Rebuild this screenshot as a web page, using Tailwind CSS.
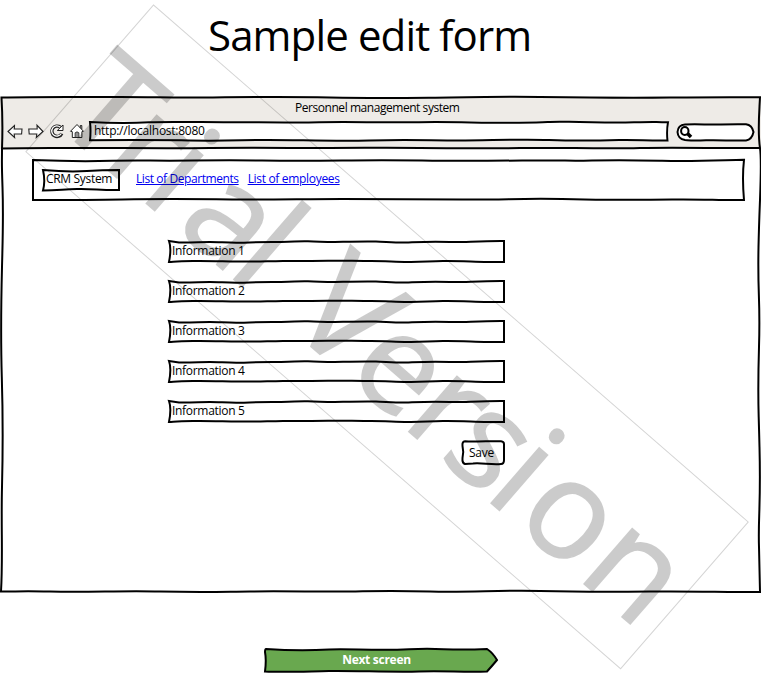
<!DOCTYPE html>
<html lang="en">
<head>
<meta charset="utf-8">
<title>Sample edit form</title>
<script src="https://cdn.jsdelivr.net/npm/@tailwindcss/browser@4"></script>
</head>
<body class="bg-white">
<svg class="hidden">
  <symbol id="field" viewBox="0 0 337 23" overflow="visible">
    <path d="M1 1 L11 2.600 C25 2.800 32 2 42 2 S60 3 72 2.700 S92 1.800 110 2 S125 1 140 1.300 S160 2.200 175 1.800 S198 1.300 208 1.500 S230 3 244 2.300 S270 1.400 282 2 S310 .8 336 1 V22 H320 C300 21.500 290 20.800 275 21 S255 22.200 240 22 S215 20.800 200 21 S180 20.400 160 20.800 S135 20.700 115 21 S90 21.800 70 21.500 S40 20.800 25 21 S10 21.400 1 22 C2 17 3.500 8 1 1 Z" fill="none" stroke="#000" stroke-width="2"/>
  </symbol>
</svg>
<main class="relative flex h-[673px] w-[761px] flex-col overflow-hidden font-['Open_Sans','Noto_Sans',sans-serif] text-[12px] leading-4 text-black">
  <h1 class="h-[97px] pt-[5px] pl-[208px] text-[42px] leading-[59px] tracking-[-0.88px] whitespace-nowrap">Sample edit form</h1>

  <section class="relative h-[496px] w-full">
    <header class="h-[52px] bg-[#eeebe7]">
      <div class="flex h-[24px] pt-[3px] pl-[295px]"><span class="tracking-[-0.45px] whitespace-nowrap">Personnel management system</span></div>
      <div class="flex h-[20px] items-center pl-[7px]">
        <svg class="mr-[4px] size-[17px]" viewBox="0 0 17 17" fill="#fff" stroke="#222" stroke-width="1.100"><path d="M1 8.500 L7.500 2.500 Q7.500 4.500 7.200 6 H15 L14.600 11 H7.200 L7.600 14.500 Z"/></svg>
        <svg class="mr-[4px] size-[17px]" viewBox="0 0 17 17" fill="#fff" stroke="#222" stroke-width="1.100"><path d="M15 8.500 L9 2.300 L9.200 6 H.8 L1.200 11 H8.800 L8.300 14.500 Z"/></svg>
        <svg class="mr-[4px] size-[16px]" viewBox="0 0 16 16" fill="none"><path d="M12.800 10.500 A5.200 5.200 0 1 1 11.300 4.200" stroke="#222" stroke-width="3.400"/><path d="M12.300 10.500 A5.100 5.100 0 1 1 11.300 4.300" stroke="#fff" stroke-width="1.300"/><path d="M14 2 V7.500 H8.300 Z" fill="#fff" stroke="#222"/></svg>
        <svg class="mr-[4px] size-[16px]" viewBox="0 0 16 16" fill="#fff" stroke="#222" stroke-width="1"><path d="M8 1.500 L14.500 8.300 L12.900 8.700 V14.500 H3.300 V8.700 L1.500 8.300 Z"/><path d="M11.300 4.800 V2.500 H12.800 V6.300 M6.200 14.500 V9.800 Q8 8 9.800 9.800 V14.500 M8 9.500 V14" fill="none"/></svg>
        <div class="relative h-[20px] w-[580px] bg-white">
          <span class="absolute top-[2px] left-[5px] z-10 tracking-[-0.26px] whitespace-nowrap">http://localhost:8080</span>
          <svg class="absolute inset-0 overflow-visible" width="580" height="20" fill="none" stroke="#000" stroke-width="2"><path d="M1 1 C20 2 40 2.300 60 1.300 S120 1.500 160 1.300 S200 2 230 1.300 S290 1.700 330 1.200 S390 2 430 1.700 S450 .4 480 .8 S520 2 545 1.300 S560 1 579 1.200 Q577.500 10 578.500 19.500 C560 20 548 18.500 530 19 S490 20 460 19 S400 19.500 370 19.500 S320 18.500 280 19.500 S200 18.500 170 19 S130 20 100 19.500 S50 18.500 1 19.300 Q2 10 1 1 Z"/></svg>
        </div>
        <svg class="ml-[7px] mt-[3px] h-[19px] w-[79px] shrink-0" viewBox="0 0 79 19" fill="#fff" stroke="#000" stroke-width="2"><path d="M9 1.500 C25 .8 30 2 45 1.500 S60 1 70 1.300 Q76 2 77.500 9 Q76 16.500 70 17.500 C55 18 45 16.800 30 17.300 S15 17.500 9 17 Q2 16 1.500 9 Q2 2 9 1.500 Z"/><ellipse cx="8.800" cy="8" rx="3.700" ry="4"/><path d="M11.500 10.500 L15 14" stroke-width="3.500"/></svg>
      </div>
    </header>

    <nav class="relative mt-[10px] ml-[32px] flex h-[42px] w-[713px] items-center pl-[10px]">
      <svg class="absolute inset-0 overflow-visible" width="713" height="42" fill="none" stroke="#000" stroke-width="2"><path d="M1 1 C25 2 50 2.600 80 1.800 S120 2 160 1.500 S200 1 230 1.500 S270 2 310 1.500 S350 .9 390 1.500 S440 2 490 1.500 S530 2.300 560 1.500 S600 1 630 1.800 S680 1.600 712 .8 Q710 18 712 41 C690 41.500 670 40 640 40.500 S570 41 530 40 S470 41 430 40.500 S350 40 310 40 S240 41 200 40.500 S120 40 90 40.500 S50 41 1 41 Z"/></svg>
      <div class="relative h-[22px] w-[78px] pl-[4px] leading-[20px]"><span class="tracking-[-0.32px] whitespace-nowrap">CRM System</span>
        <svg class="absolute inset-0 overflow-visible" width="78" height="22" fill="none" stroke="#000" stroke-width="2"><path d="M1 1 C18 2.500 30 3 45 2 S65 1 77 1 V21 C60 21.500 50 19.500 35 20 S15 21.500 1 21.500 Q3.500 12 1 1 Z"/></svg>
      </div>
      <a class="mb-[2px] ml-[16px] tracking-[-0.42px] whitespace-nowrap text-[#0000f0] underline">List of Departments</a>
      <a class="mb-[2px] ml-[9px] tracking-[-0.32px] whitespace-nowrap text-[#0000f0] underline">List of employees</a>
    </nav>

    <form class="mt-[39px] ml-[168px] flex w-[337px] flex-col gap-[17px]">
      <div class="relative h-[23px] pl-[4px] leading-[21px]"><svg class="absolute inset-0 overflow-visible" width="337" height="23"><use href="#field"/></svg><span class="tracking-[-0.3px]">Information 1</span></div>
      <div class="relative h-[23px] pl-[4px] leading-[21px]"><svg class="absolute inset-0 overflow-visible" width="337" height="23"><use href="#field"/></svg><span class="tracking-[-0.3px]">Information 2</span></div>
      <div class="relative h-[23px] pl-[4px] leading-[21px]"><svg class="absolute inset-0 overflow-visible" width="337" height="23"><use href="#field"/></svg><span class="tracking-[-0.3px]">Information 3</span></div>
      <div class="relative h-[23px] pl-[4px] leading-[21px]"><svg class="absolute inset-0 overflow-visible" width="337" height="23"><use href="#field"/></svg><span class="tracking-[-0.3px]">Information 4</span></div>
      <div class="relative h-[23px] pl-[4px] leading-[21px]"><svg class="absolute inset-0 overflow-visible" width="337" height="23"><use href="#field"/></svg><span class="tracking-[-0.3px]">Information 5</span></div>
      <button type="button" class="relative h-[25px] w-[44px] self-end pr-[3px] text-center leading-[23px]"><svg class="absolute inset-0 overflow-visible" width="44" height="25" fill="none" stroke="#000" stroke-width="2"><path d="M4 1.200 C12 2 16 1.200 25 1.200 H40 Q43 1.500 43 4 V20 Q43 24 40 24 C30 25 20 22.500 12 23.500 L4 24 Q1 23 1.500 18 Q3 12 1.500 6 Q1 1.500 4 1.200 Z"/></svg><span class="tracking-[-0.2px]">Save</span></button>
    </form>
    <svg class="pointer-events-none absolute inset-0 overflow-visible" width="761" height="496" fill="none" stroke="#000" stroke-width="2"><path d="M1.500 .5 C40 -.5 80 0 120 0 S165 1 210 .5 S280 -.5 330 .5 S400 1 450 .5 S500 -.5 540 0 S620 1 670 .5 S730 0 760 .3 C759 20 757.500 35 760 51 S759.500 100 758.500 150 S760.500 200 759 250 S758 290 759.500 350 S758 420 759 450 L760 495 C720 495 690 494 650 494.500 S580 495 540 494 S470 495.500 430 494.500 S380 494 350 494.500 S290 494 250 494.500 S200 495.500 160 494.500 S90 495.500 50 494.500 S20 495 1 494.500 C3 460 1 430 2 390 S3 320 1.800 280 S1 210 2 170 S3.500 120 2.500 90 S2 70 2 52 Q3 25 1.500 .5 Z"/><path d="M1 51.500 C30 50.500 60 51 90 51 S170 51.500 210 51 S290 51 330 51 S380 50.500 420 51 S480 51.600 520 51 S600 52 640 51 S720 51.500 760 51"/></svg>
  </section>

  <a class="relative mt-[55px] ml-[264px] block h-[25px] w-[234px] pr-[9px] text-center leading-[23px] text-white">
    <svg class="absolute inset-0 overflow-visible" width="234" height="25" fill="#69a84f" stroke="#000" stroke-width="2"><path d="M2 1 C25 2.500 45 2.600 65 1.500 S110 3 145 1.300 S180 3 223 1 Q229 5 233 12 Q228 18 223 23.500 C200 24.500 180 22.500 155 23.500 S90 22.500 65 23 S20 24.500 1 23.500 Q2.500 12 1 4 Q1 1 2 1 Z"/></svg>
    <span class="relative font-bold tracking-[-0.28px]">Next screen</span>
  </a>

  <svg class="pointer-events-none absolute inset-0" width="761" height="673" viewBox="0 0 761 673" aria-hidden="true">
    <g transform="translate(153.500 5) rotate(41)">
      <rect width="788" height="194.500" fill="none" stroke="#000" stroke-opacity=".17"/>
      <text y="154.500" x="-2 63 113 161 229 290 306 386 461 510 570 609 693" font-size="137" fill="#000" stroke="#000" stroke-width="1.500" opacity=".2" xml:space="preserve"><tspan font-size="140">T</tspan>rial <tspan font-size="144">V</tspan>ersion</text>
    </g>
  </svg>
</main>
</body>
</html>
